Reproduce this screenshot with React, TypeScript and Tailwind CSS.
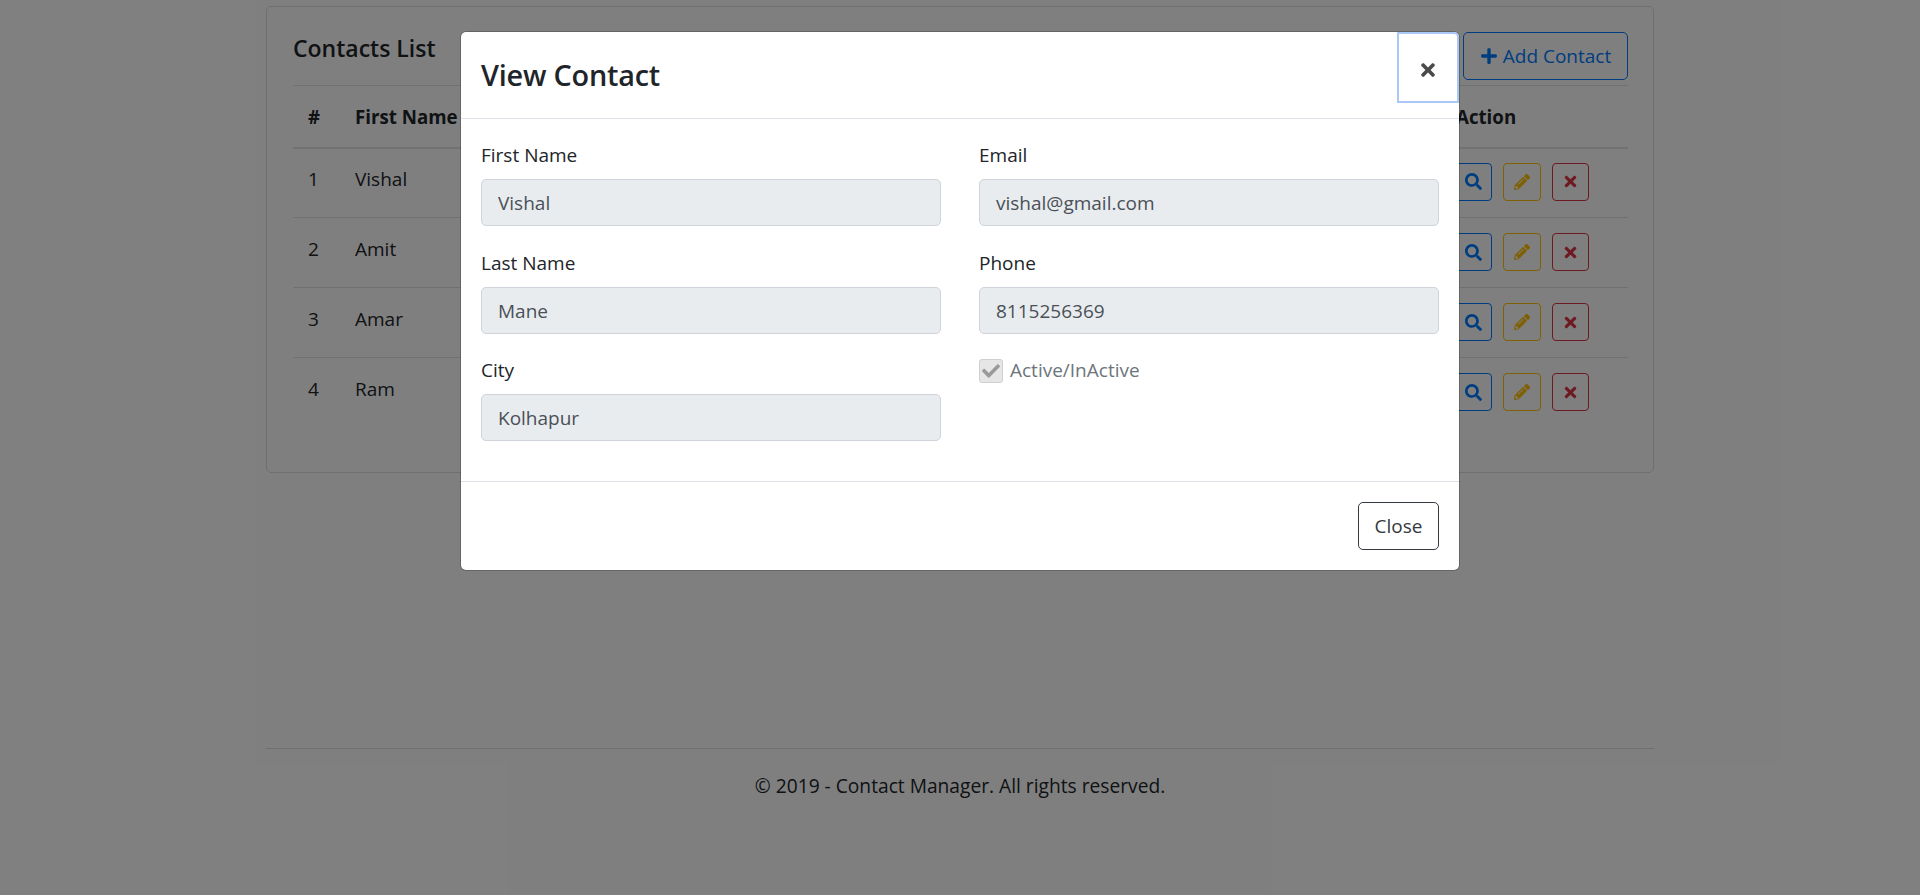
import { FaPlus, FaSearch, FaPencilAlt, FaTimes, FaCheck } from "react-icons/fa";

const rows = [
  ["1", "Vishal"],
  ["2", "Amit"],
  ["3", "Amar"],
  ["4", "Ram"],
];

function Field({ label, value }: { label: string; value: string }) {
  return (
    <div className="flex flex-col">
      <label className="h-[24px] leading-[24px] mb-[12px]">{label}</label>
      <div className="h-[47px] flex items-center pt-[2px] px-[16px] bg-[#e9ecef] border border-[#ced4da] rounded-[5px] text-[#495057]">
        {value}
      </div>
    </div>
  );
}

export default function App() {
  return (
    <div className="relative h-[895px] overflow-hidden bg-white text-[19px] text-[#212529] font-['Open_Sans','Noto_Sans',sans-serif]">
      <div className="w-[1388px] ml-[266px] pt-[6px]">
        <div className="h-[467px] border border-[#dfdfdf] rounded-[5px] pl-[26px] pr-[25px] pt-[25px]">
          <div className="flex items-start justify-between h-[48px]">
            <h4 className="text-[23px] font-semibold leading-[32px]">Contacts List</h4>
            <button className="h-[48px] w-[165px] flex items-center justify-center gap-[5px] border border-[#007bff] text-[#007bff] rounded-[5px]">
              <FaPlus className="text-[18px]" />
              <span>Add Contact</span>
            </button>
          </div>
          <table className="w-full mt-[5px] border-collapse text-left">
            <thead>
              <tr className="h-[62px] border-t border-[#dee2e6] border-b-2 border-b-[#dee2e6]">
                <th className="pl-[15px] w-[62px] font-bold pt-[2px] text-[18.7px]">#</th>
                <th className="font-bold pt-[2px] text-[18.7px]">First Name</th>
                <th />
                <th className="w-[172px] font-bold pt-[2px] text-[18.7px] pl-[0px]">Action</th>
              </tr>
            </thead>
            <tbody>
              {rows.map((r, i) => (
                <tr key={r[0]} className="h-[70px] border-b border-[#dee2e6] last:border-b-0 align-top">
                  <td className={i === 0 ? "pl-[15px] pt-[16px]" : "pl-[15px] pt-[17px]"}>{r[0]}</td>
                  <td className={i === 0 ? "pt-[16px]" : "pt-[17px]"}>{r[1]}</td>
                  <td />
                  <td className={i === 0 ? "pt-[14px]" : "pt-[15px]"}>
                    <div className="flex gap-[11px] -ml-[2px]">
                      <button className="w-[38px] h-[38px] flex items-center justify-center border border-[#007bff] rounded-[4px] text-[#007bff]"><FaSearch className="text-[17px]" /></button>
                      <button className="w-[38px] h-[38px] flex items-center justify-center border border-[#ffc107] rounded-[4px] text-[#ffc107]"><FaPencilAlt className="text-[16px]" /></button>
                      <button className="w-[37px] h-[38px] flex items-center justify-center border border-[#dc3545] rounded-[4px] text-[#dc3545]"><FaTimes className="text-[17px]" /></button>
                    </div>
                  </td>
                </tr>
              ))}
            </tbody>
          </table>
        </div>
        <footer className="mt-[275px] border-t border-[#dfdfdf] pt-[23px] text-center text-[19.2px]">
          © 2019 - Contact Manager. All rights reserved.
        </footer>
      </div>

      <div className="absolute inset-0 bg-black/50" />

      <div className="absolute left-[461px] top-[32px] w-[998px] h-[538px] bg-white rounded-[5px] flex flex-col shadow-[0_0_0_1px_rgba(0,0,0,0.2)]">
        <div className="h-[87px] border-b border-[#dee2e6] flex justify-between">
          <h5 className="text-[28.8px] font-semibold pl-[20px] pt-[24px] leading-[38px] tracking-[-0.2px]">View Contact</h5>
          <button className="w-[62px] h-[71px] border-2 border-[#a9c8f8] rounded-tr-[5px] text-[#4a4a4a] flex items-center justify-center pt-[4px]">
            <FaTimes className="text-[20px]" />
          </button>
        </div>
        <div className="flex-1 px-[20px] pt-[24px] grid grid-cols-2 gap-x-[38px] content-start gap-y-[24.5px]">
          <Field label="First Name" value="Vishal" />
          <Field label="Email" value="vishal@gmail.com" />
          <Field label="Last Name" value="Mane" />
          <Field label="Phone" value="8115256369" />
          <Field label="City" value="Kolhapur" />
          <div className="flex items-start gap-[7px] text-[#6c757d]">
            <div className="w-[24px] h-[24px] mt-[1px] bg-[#e6e6e6] border border-[#cfcfcf] rounded-[3px] flex items-center justify-center text-[#9a9a9a]">
              <FaCheck className="text-[18px]" />
            </div>
            <span className="leading-[24px]">Active/InActive</span>
          </div>
        </div>
        <div className="h-[89px] border-t border-[#dee2e6] flex items-center justify-end pr-[20px]">
          <button className="w-[81px] h-[48px] border border-[#343a40] rounded-[5px] text-[#343a40]">Close</button>
        </div>
      </div>
    </div>
  );
}
